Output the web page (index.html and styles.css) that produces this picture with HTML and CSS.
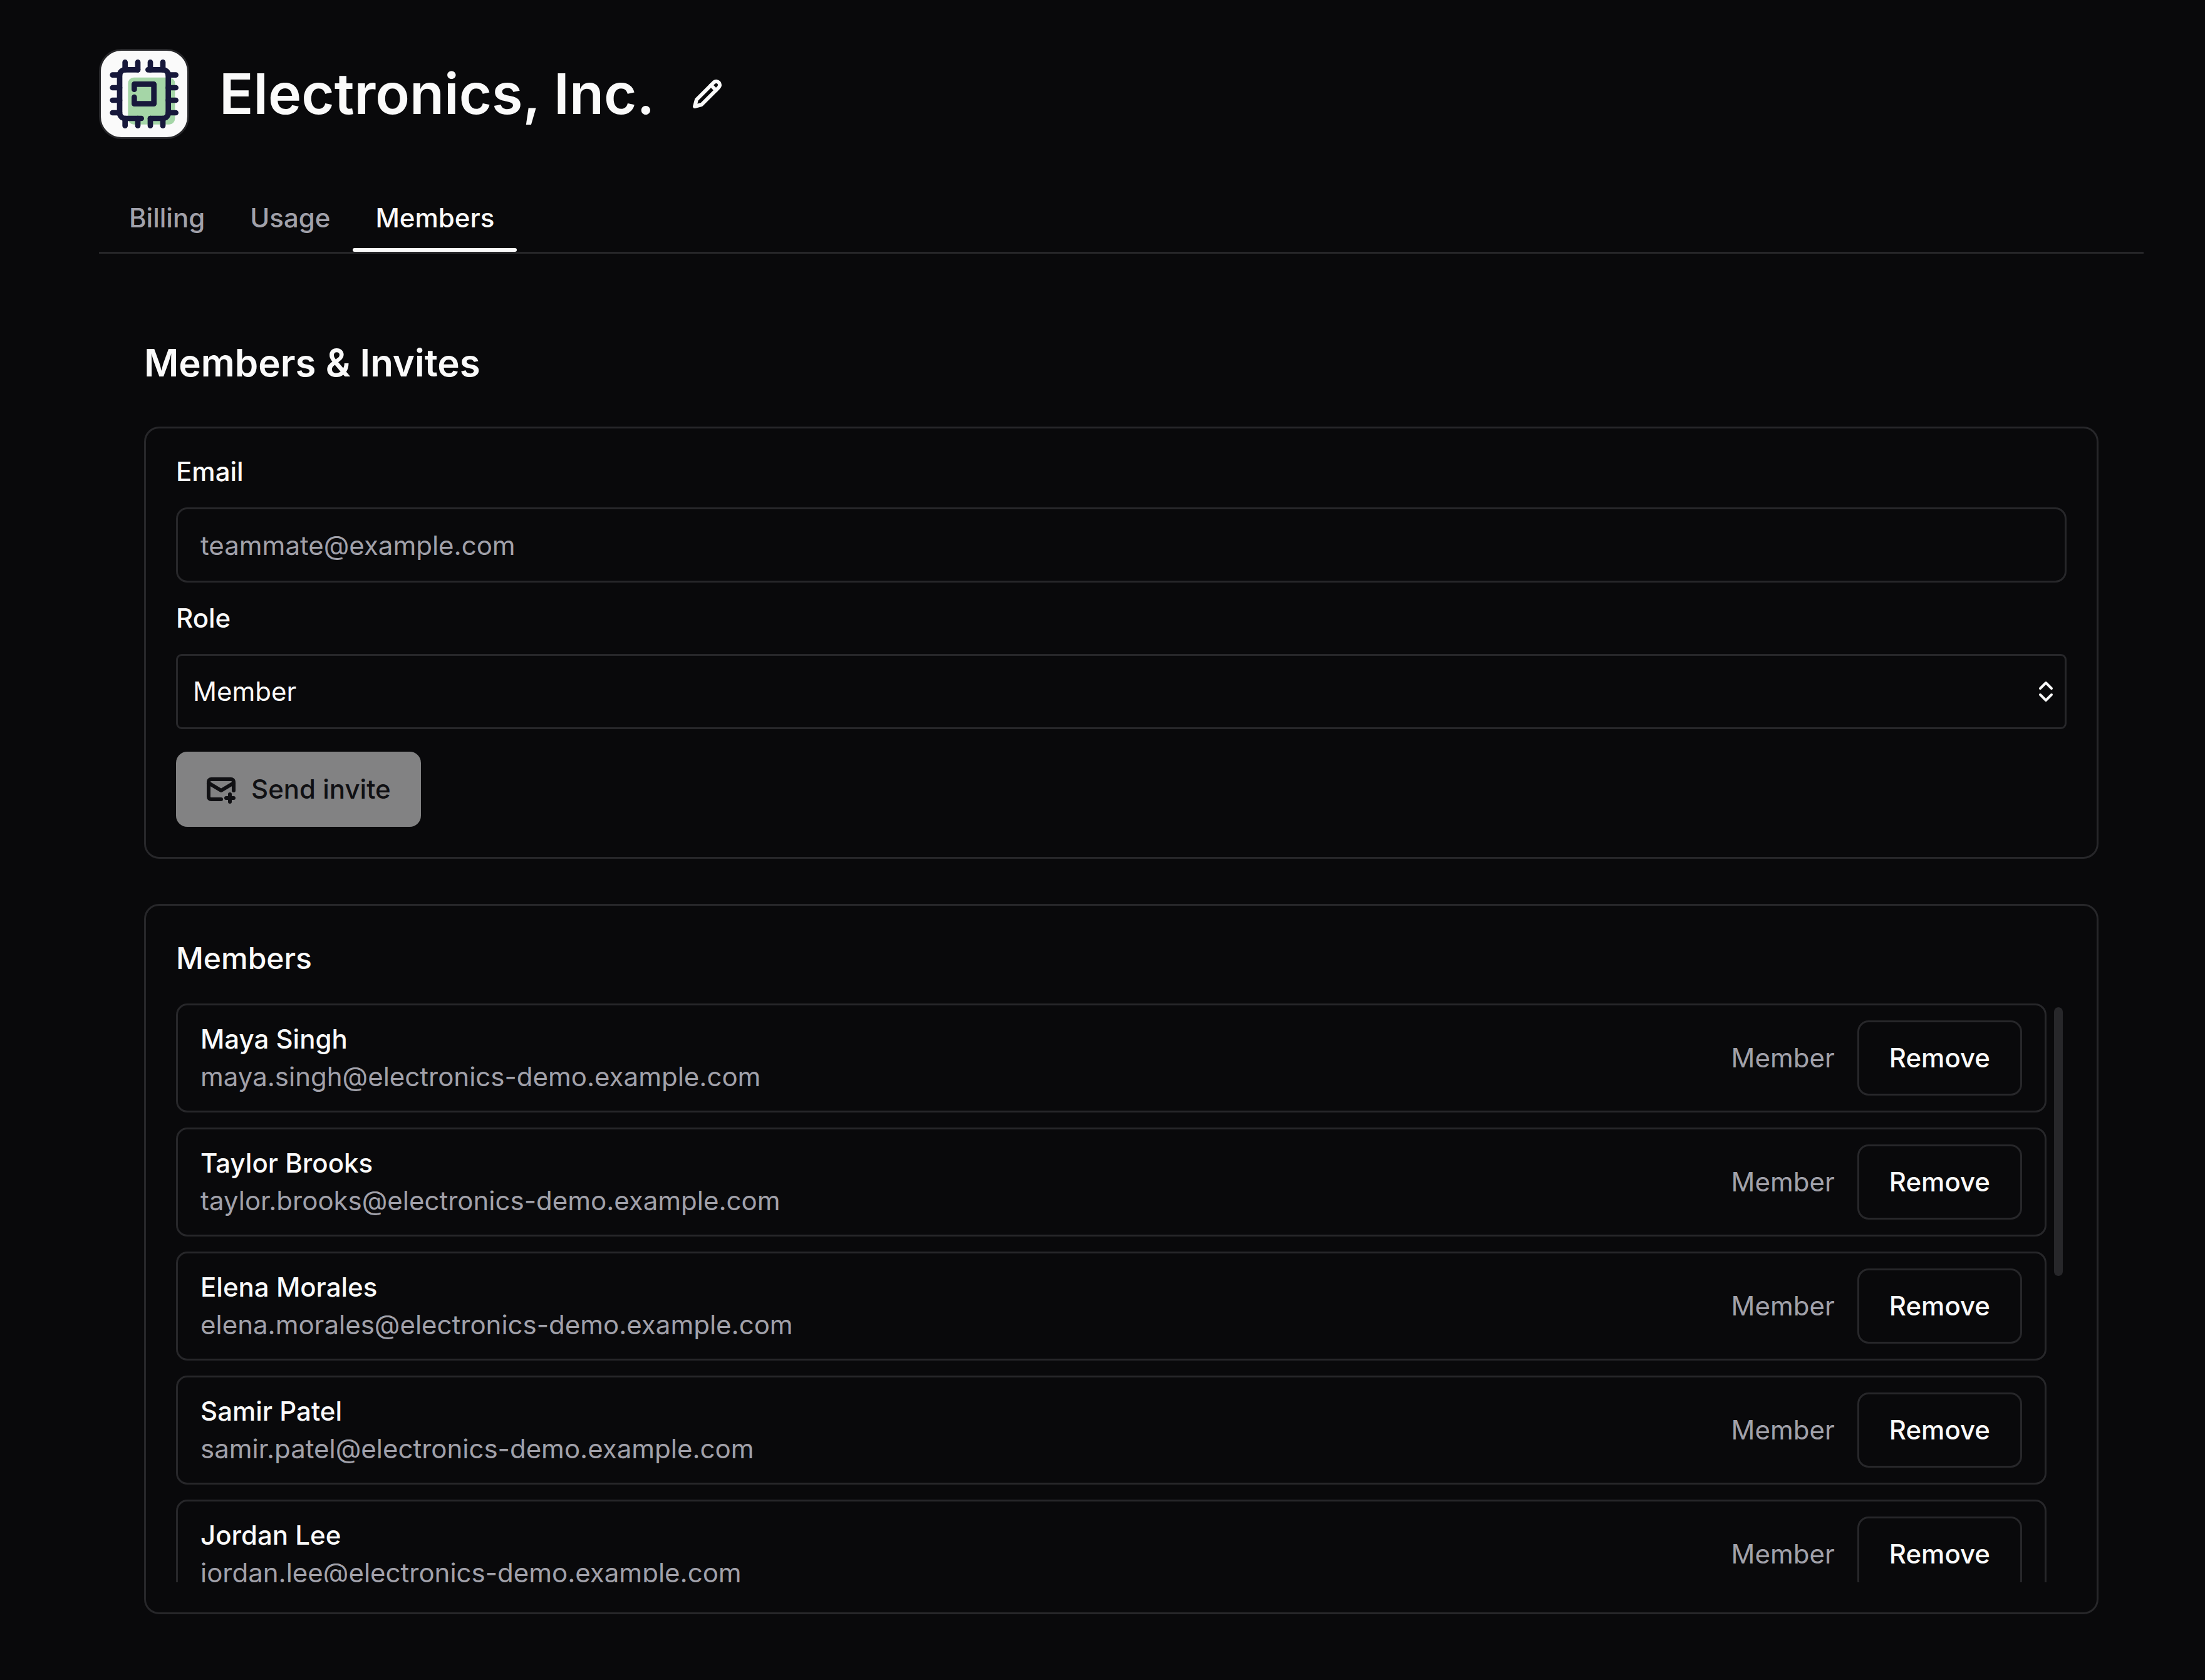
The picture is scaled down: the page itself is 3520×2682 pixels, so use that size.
FILE: index.html
```html
<!DOCTYPE html>
<html lang="en">

<head>
  <meta charset="UTF-8">
  <meta name="viewport" content="width=device-width, initial-scale=1.0">
  <title>Electronics, Inc. - Members</title>
  <link rel="stylesheet" href="styles.css">
</head>

<body>
  <div class="page">
    <header class="org-header">
      <div class="org-logo">
        <svg viewBox="33 33 414 414" fill="none" stroke="#17183b" stroke-width="26" stroke-linecap="round" stroke-linejoin="round" aria-hidden="true">
          <rect x="163" y="161" width="225" height="225" rx="28" fill="#a5d6a7" stroke="none" />
          <path d="M210 124H149a26 26 0 0 0-26 26V331a26 26 0 0 0 26 26H227" />
          <path d="M259 124H330a26 26 0 0 1 26 26V331a26 26 0 0 1-26 26H270" />
          <path d="M149 88V124M210 88V124M270 88V124M330 88V124" />
          <path d="M149 357V392M210 357V392M270 357V392M330 357V392" />
          <path d="M89 149H123M89 210H123M89 270H123M89 330H123" />
          <path d="M356 149H392M356 210H392M356 270H392M356 330H392" />
          <path d="M193 218V193H287V287H193V255" />
        </svg>
      </div>
      <h1>Electronics, Inc.</h1>
      <button class="edit-button" type="button" aria-label="Edit name">
        <svg class="icon" viewBox="0 0 24 24" aria-hidden="true">
          <path d="M17 3a2.85 2.83 0 1 1 4 4L7.5 20.5 2 22l1.5-5.5Z" />
          <path d="m15 5 4 4" />
        </svg>
      </button>
    </header>

    <nav class="tabs">
      <a class="tab" href="#billing">Billing</a>
      <a class="tab" href="#usage">Usage</a>
      <a class="tab active" href="#members">Members</a>
    </nav>

    <main class="content">
      <h2>Members &amp; Invites</h2>

      <!-- Invite form -->
      <form class="card invite-form">
        <label for="email">Email</label>
        <input type="email" id="email" placeholder="teammate@example.com">

        <label for="role">Role</label>
        <div class="select-wrap">
          <select id="role">
            <option value="member">Member</option>
            <option value="admin">Admin</option>
          </select>
          <svg class="select-icon" viewBox="0 0 48 48" aria-hidden="true">
            <path d="m15 19 9-9 9 9M15 29l9 9 9-9" />
          </svg>
        </div>

        <button class="send-button" type="submit" disabled>
          <svg class="icon" viewBox="0 0 24 24" aria-hidden="true">
            <path d="M22 13V6a2 2 0 0 0-2-2H4a2 2 0 0 0-2 2v12a2 2 0 0 0 2 2h8" />
            <path d="m2 7 10 6 10-6" />
            <path d="M19 16v6M16 19h6" />
          </svg>
          Send invite
        </button>
      </form>

      <!-- Member list -->
      <section class="card">
        <h3>Members</h3>
        <div class="member-scroll">
          <ul class="member-list">
            <li class="member">
              <div class="member-info">
                <p class="member-name">Maya Singh</p>
                <p class="member-email">maya.singh@electronics-demo.example.com</p>
              </div>
              <span class="member-role">Member</span>
              <button class="remove-button" type="button">Remove</button>
            </li>
            <li class="member">
              <div class="member-info">
                <p class="member-name">Taylor Brooks</p>
                <p class="member-email">taylor.brooks@electronics-demo.example.com</p>
              </div>
              <span class="member-role">Member</span>
              <button class="remove-button" type="button">Remove</button>
            </li>
            <li class="member">
              <div class="member-info">
                <p class="member-name">Elena Morales</p>
                <p class="member-email">elena.morales@electronics-demo.example.com</p>
              </div>
              <span class="member-role">Member</span>
              <button class="remove-button" type="button">Remove</button>
            </li>
            <li class="member">
              <div class="member-info">
                <p class="member-name">Samir Patel</p>
                <p class="member-email">samir.patel@electronics-demo.example.com</p>
              </div>
              <span class="member-role">Member</span>
              <button class="remove-button" type="button">Remove</button>
            </li>
            <li class="member">
              <div class="member-info">
                <p class="member-name">Jordan Lee</p>
                <p class="member-email">jordan.lee@electronics-demo.example.com</p>
              </div>
              <span class="member-role">Member</span>
              <button class="remove-button" type="button">Remove</button>
            </li>
          </ul>
          <div class="scrollbar">
            <div class="scrollbar-thumb"></div>
          </div>
        </div>
      </section>
    </main>
  </div>
</body>

</html>
```
FILE: styles.css
```css
/* styles.css */
* {
  box-sizing: border-box;
}

body {
  margin: 0;
  background-color: #09090b;
  color: #fafafa;
  font-family: Inter, sans-serif;
  font-size: 42px;
  line-height: 60px;
}

h1,
h2,
h3,
p,
ul {
  margin: 0;
  padding: 0;
}

button,
input,
select {
  font: inherit;
  color: inherit;
}

.page {
  padding: 78px 98px 105px 158px;
}

.icon {
  width: 48px;
  height: 48px;
  fill: none;
  stroke: currentColor;
  stroke-width: 3;
  stroke-linecap: round;
  stroke-linejoin: round;
}

/* Header */
.org-header {
  display: flex;
  align-items: center;
}

.org-logo {
  width: 144px;
  height: 144px;
  margin-right: 48px;
  border: 3px solid #27272a;
  border-radius: 36px;
  background-color: #fafafa;
  overflow: hidden;
}

.org-logo svg {
  display: block;
  width: 100%;
}

h1 {
  font-size: 90px;
  line-height: 108px;
  font-weight: 600;
}

.edit-button {
  display: flex;
  margin-left: 24px;
  padding: 36px;
  border: none;
  background: none;
  cursor: pointer;
}

/* Tabs */
.tabs {
  display: flex;
  margin-top: 72px;
  padding-left: 12px;
  border-bottom: 3px solid #27272a;
}

.tab {
  position: relative;
  padding: 24px 36px;
  color: #a1a1aa;
  font-weight: 500;
  text-decoration: none;
}

.tab.active {
  color: #fafafa;
}

.tab.active::after {
  content: "";
  position: absolute;
  left: 0;
  right: 0;
  bottom: 0;
  height: 6px;
  border-radius: 3px;
  background-color: #fafafa;
}

/* Content */
.content {
  padding: 132px 72px 0;
}

h2 {
  margin-bottom: 60px;
  font-size: 60px;
  line-height: 84px;
  font-weight: 600;
}

h3 {
  margin-bottom: 36px;
  font-size: 48px;
  line-height: 72px;
  font-weight: 500;
}

.card {
  padding: 48px;
  border: 3px solid #27272a;
  border-radius: 24px;
}

.card + .card {
  margin-top: 72px;
}

/* Invite form */
.invite-form {
  display: flex;
  flex-direction: column;
  gap: 36px;
}

.invite-form label {
  line-height: 42px;
  font-weight: 500;
}

.invite-form input,
.invite-form select {
  display: block;
  width: 100%;
  height: 120px;
  padding: 0 36px;
  border: 3px solid #27272a;
  border-radius: 18px;
  background-color: transparent;
}

.invite-form input::placeholder {
  color: #a1a1aa;
}

.select-wrap {
  position: relative;
}

.invite-form select {
  appearance: none;
  padding: 0 24px;
  border-radius: 9px;
}

.select-icon {
  position: absolute;
  top: 36px;
  right: 9px;
  width: 48px;
  height: 48px;
  fill: none;
  stroke: #fafafa;
  stroke-width: 4;
  stroke-linecap: round;
  stroke-linejoin: round;
  pointer-events: none;
}

.send-button {
  display: flex;
  align-items: center;
  align-self: flex-start;
  gap: 24px;
  height: 120px;
  padding: 0 48px;
  border: none;
  border-radius: 18px;
  background-color: #fafafa;
  color: #18181b;
  font-weight: 500;
}

.send-button:disabled {
  opacity: 0.5;
}

/* Member list */
.member-scroll {
  display: flex;
  max-height: 924px;
}

.member-list {
  display: flex;
  flex: 1;
  flex-direction: column;
  gap: 24px;
  list-style: none;
  overflow-y: auto;
  scrollbar-width: none;
}

.member {
  display: flex;
  flex-shrink: 0;
  align-items: center;
  gap: 36px;
  padding: 24px 36px;
  border: 3px solid #27272a;
  border-radius: 18px;
}

.member-info {
  flex: 1;
}

.member-name {
  font-weight: 500;
}

.member-email,
.member-role {
  color: #a1a1aa;
}

.remove-button {
  height: 120px;
  padding: 0 48px;
  border: 3px solid #27272a;
  border-radius: 18px;
  background-color: transparent;
  font-weight: 500;
  cursor: pointer;
}

.scrollbar {
  width: 32px;
  padding: 6px 6px 6px 12px;
}

.scrollbar-thumb {
  height: 47%;
  border-radius: 7px;
  background-color: #27272a;
}
```
